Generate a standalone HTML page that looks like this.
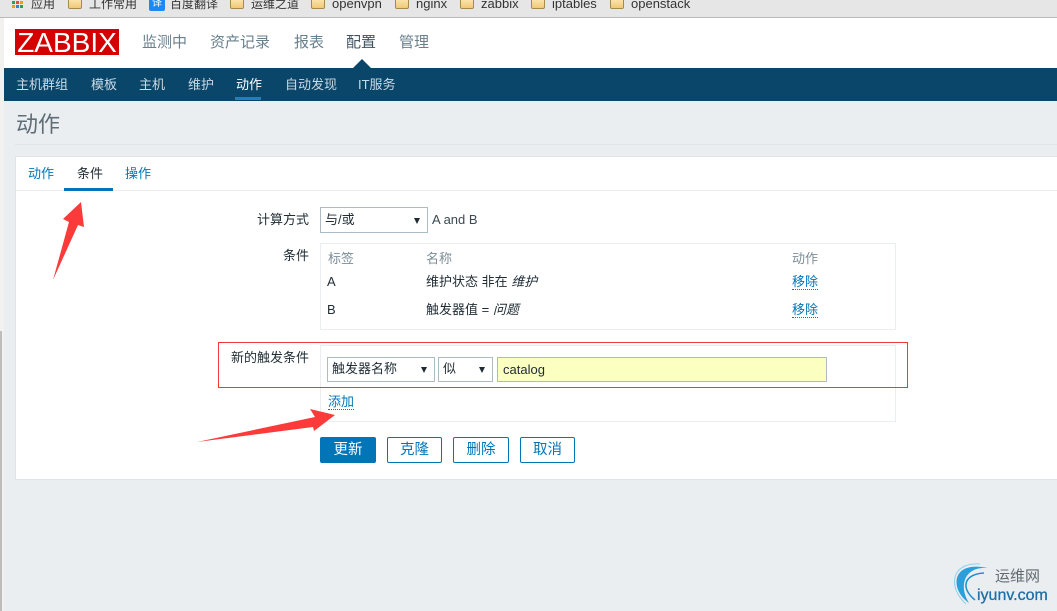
<!DOCTYPE html>
<html><head><meta charset="utf-8"><style>
html,body{margin:0;padding:0}
body{width:1057px;height:611px;overflow:hidden;position:relative;background:#ebeef0;font-family:"Liberation Sans","Noto Sans CJK SC",sans-serif;color:#1f2c33}
div,span,a{position:absolute;white-space:nowrap;box-sizing:border-box}
.bm{font-size:12px;top:-4px;line-height:16px;color:#333}
.bl{font-size:13px}
.f{width:14px;height:11px;top:-2px;background:linear-gradient(#fbe6b0,#f3c877);border:1px solid #a58a50;border-radius:2px}
.m{font-size:15px;top:33px;line-height:20px;color:#69808d}
.s{font-size:13px;top:77px;line-height:16px;color:#c9dbe6}
.t{font-size:13px;line-height:16px}
.lb{font-size:13px;line-height:16px;color:#1f2c33;text-align:right}
.g{color:#7c8e99}
.l{color:#0275b8;border-bottom:1px dotted #0275b8;line-height:15px}
.sel{background:#fff;border:1px solid #acbbc4;font-size:13px;height:25px;line-height:22px;padding-left:4px}
.sel i{position:absolute;right:7px;top:9px;width:0;height:0;border:3.5px solid transparent;border-top:6px solid #1f2c33;border-bottom:0}
.b{top:437px;height:26px;border:1px solid #0275b8;border-radius:2px;color:#0275b8;font-size:14.5px;line-height:25px;text-align:center;background:#fff}
</style></head><body>
<div style="left:0;top:0;width:1057px;height:18px;background:#e6e6e6;border-bottom:1px solid #b9b9b9"></div>
<div style="left:0;top:18px;width:4px;height:593px;background:#f2f1ef"></div>
<div style="left:0;top:331px;width:2px;height:280px;background:#bdbdbd"></div>
<svg style="position:absolute;left:12px;top:0" width="14" height="10"><g fill="#e0a020"><rect x="0" y="1" width="3" height="3" fill="#3a9a50"/><rect x="4" y="1" width="3" height="3" fill="#e05040"/><rect x="8" y="1" width="3" height="3"/><rect x="0" y="5" width="3" height="3" fill="#e0a020"/><rect x="4" y="5" width="3" height="3" fill="#3a80d0"/><rect x="8" y="5" width="3" height="3" fill="#3a9a50"/></g></svg>
<span class="bm" style="left:31px">应用</span>
<div class="f" style="left:68px"></div><span class="bm" style="left:89px">工作常用</span>
<div style="left:149px;top:-2px;width:16px;height:13px;background:#1e88f0;border-radius:2px;color:#fff;font-size:10px;line-height:12px;text-align:center">译</div><span class="bm" style="left:170px">百度翻译</span>
<div class="f" style="left:230px"></div><span class="bm" style="left:251px">运维之道</span>
<div class="f" style="left:311px"></div><span class="bm bl" style="left:332px">openvpn</span>
<div class="f" style="left:395px"></div><span class="bm bl" style="left:416px">nginx</span>
<div class="f" style="left:460px"></div><span class="bm bl" style="left:481px">zabbix</span>
<div class="f" style="left:531px"></div><span class="bm bl" style="left:552px">iptables</span>
<div class="f" style="left:610px"></div><span class="bm bl" style="left:631px">openstack</span>

<div style="left:4px;top:18px;width:1053px;height:50px;background:#fff"></div>
<div style="left:15px;top:29px;width:104px;height:26px;background:#d40000;color:#fff;font-size:28px;line-height:27px;text-align:center">ZABBIX</div>
<span class="m" style="left:142px">监测中</span>
<span class="m" style="left:210px">资产记录</span>
<span class="m" style="left:294px">报表</span>
<span class="m" style="left:346px;color:#3f5360">配置</span>
<span class="m" style="left:399px">管理</span>
<div style="left:353px;top:59px;width:0;height:0;border:9px solid transparent;border-top:0;border-bottom:9px solid #0a466a"></div>
<div style="left:4px;top:68px;width:1053px;height:33px;background:#0a466a"></div>
<span class="s" style="left:16px">主机群组</span>
<span class="s" style="left:91px">模板</span>
<span class="s" style="left:139px">主机</span>
<span class="s" style="left:188px">维护</span>
<span class="s" style="left:236px;color:#fff">动作</span>
<span class="s" style="left:285px">自动发现</span>
<span class="s" style="left:358px">IT服务</span>
<div style="left:235px;top:97px;width:26px;height:3px;background:#1f7fc0"></div>

<div style="left:16px;top:111px;font-size:22px;line-height:28px;color:#5e6e78">动作</div>
<div style="left:15px;top:144px;width:1042px;height:1px;background:#dfe4e7"></div>

<div style="left:15px;top:156px;width:1042px;height:324px;background:#fff;border:1px solid #dfe4e7;border-right:0"></div>
<div style="left:16px;top:190px;width:1041px;height:1px;background:#ebeef0"></div>
<span class="t" style="left:28px;top:166px;color:#0275b8">动作</span>
<span class="t" style="left:77px;top:166px">条件</span>
<span class="t" style="left:125px;top:166px;color:#0275b8">操作</span>
<div style="left:64px;top:188px;width:49px;height:3px;background:#0275b8"></div>

<div class="lb" style="right:748px;top:212px">计算方式</div>
<div class="sel" style="left:320px;top:207px;width:108px;height:26px;line-height:24px">与/或<i style="top:10px"></i></div>
<span class="t" style="left:432px;top:212px;color:#3b4a54">A and B</span>

<div class="lb" style="right:748px;top:248px">条件</div>
<div style="left:320px;top:243px;width:576px;height:87px;border:1px solid #ebeef0"></div>
<span class="t g" style="left:328px;top:251px">标签</span>
<span class="t g" style="left:426px;top:251px">名称</span>
<span class="t g" style="left:792px;top:251px">动作</span>
<span class="t" style="left:327px;top:274px">A</span>
<span class="t" style="left:426px;top:274px">维护状态 非在 <em>维护</em></span>
<span class="t l" style="left:792px;top:274px">移除</span>
<span class="t" style="left:327px;top:302px">B</span>
<span class="t" style="left:426px;top:302px">触发器值 = <em>问题</em></span>
<span class="t l" style="left:792px;top:302px">移除</span>

<div class="lb" style="right:748px;top:350px">新的触发条件</div>
<div style="left:320px;top:345px;width:576px;height:77px;border:1px solid #ebeef0"></div>
<div class="sel" style="left:327px;top:357px;width:108px">触发器名称<i></i></div>
<div class="sel" style="left:438px;top:357px;width:55px">似<i></i></div>
<div style="left:497px;top:357px;width:330px;height:25px;background:#fbffc0;border:1px solid #acbbc4;font-size:13px;line-height:23px;padding-left:5px">catalog</div>
<span class="t l" style="left:328px;top:394px">添加</span>

<div class="b" style="left:320px;width:56px;background:#0275b8;color:#fff">更新</div>
<div class="b" style="left:387px;width:55px">克隆</div>
<div class="b" style="left:453px;width:56px">删除</div>
<div class="b" style="left:520px;width:55px">取消</div>

<div style="left:218px;top:342px;width:690px;height:46px;border:1px solid #ee3a3a"></div>
<svg style="position:absolute;left:0;top:0" width="1057" height="611">
<polygon points="81,202 84,227 78,225 53,280 69,222 63,219" fill="#fb3a3a"/>
<polygon points="197,442 315,417 310,409 335,415 314,431 313,427" fill="#fb3a3a"/>
<path d="M969,603 C950,590 950,560 988,568 C965,566 958,585 969,603 Z" fill="#2a9fdc"/>
<path d="M975,600 C960,588 964,574 984,573" fill="none" stroke="#1c8ed0" stroke-width="1.5"/>
<path d="M966,604 C948,588 950,562 980,564" fill="none" stroke="#8fd0ee" stroke-width="1"/>
</svg>
<span style="left:995px;top:569px;font-size:15px;line-height:16px;color:#606a70">运维网</span>
<span style="left:977px;top:588px;font-size:16px;line-height:16px;color:#1c6fa8;-webkit-text-stroke:.3px #1c6fa8">iyunv.com</span>
</body></html>
